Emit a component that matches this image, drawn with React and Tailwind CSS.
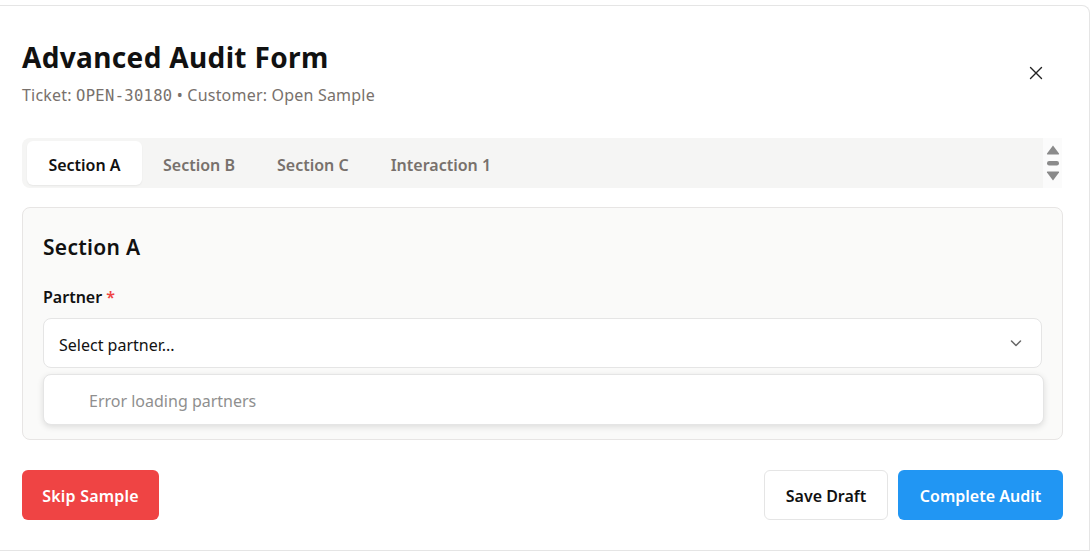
import React from "react";

const font = { fontFamily: '"Noto Sans", "Open Sans", sans-serif' };

export default function App() {
  return (
    <div className="w-[1090px] h-[551px] overflow-hidden bg-white" style={font}>
      <div className="mt-[5px] h-[546px] border-y border-r border-[#e5e5e5] rounded-tr-lg bg-white flex flex-col px-[22px]">
        {/* Header */}
        <div className="flex items-start justify-between pt-[34px] w-[1041px]">
          <div>
            <h1 className="text-[28px] leading-[34px] font-bold text-[#111] tracking-[0.35px]">Advanced Audit Form</h1>
            <p className="mt-[10px] text-[16px] leading-[22px] text-[#78716c] tracking-[0.2px]">
              Ticket: <span style={{ fontFamily: '"DejaVu Sans Mono", monospace' }} className="text-[15.5px] tracking-[0.3px]">OPEN-30180</span> • Customer: Open Sample
            </p>
          </div>
          <button className="mt-[26px] mr-[20px] w-[14px] h-[14px] text-[#222]">
            <svg viewBox="0 0 14 14" width="14" height="14" fill="none" stroke="currentColor" strokeWidth="1.4" strokeLinecap="round">
              <path d="M1.5 1.5 L12.5 12.5 M12.5 1.5 L1.5 12.5" />
            </svg>
          </button>
        </div>

        {/* Tabs */}
        <div className="mt-[31px] flex items-stretch h-[50px] w-[1040px]">
          <div className="flex-1 bg-[#f5f5f4] rounded-l-lg flex items-center px-[5px]">
            <div className="h-[44px] w-[115px] pt-[3px] bg-white rounded-md shadow-[0_1px_2px_rgba(0,0,0,0.06)] flex items-center justify-center text-[16px] font-semibold text-[#111]">Section A</div>
            <div className="h-[44px] pt-[3px] px-[21px] flex items-center text-[16px] font-semibold text-[#78716c]">Section B</div>
            <div className="h-[44px] pt-[3px] px-[21px] flex items-center text-[16px] font-semibold text-[#78716c]">Section C</div>
            <div className="h-[44px] pt-[3px] px-[21px] flex items-center text-[16px] font-semibold text-[#78716c]">Interaction 1</div>
          </div>
          <div className="w-[19px] bg-[#fbfbfb] flex items-center justify-center">
            <svg width="14" height="38" viewBox="0 0 14 38" fill="#8a8a8a">
              <path d="M7 1.5 L13 9.5 Q13.5 10.5 12.3 10.5 L1.7 10.5 Q0.5 10.5 1 9.5 Z" />
              <rect x="1" y="17" width="12" height="4.5" rx="2.2" />
              <path d="M7 36.5 L13 28.5 Q13.5 27.5 12.3 27.5 L1.7 27.5 Q0.5 27.5 1 28.5 Z" />
            </svg>
          </div>
        </div>

        {/* Section card */}
        <div className="mt-[19px] w-[1041px] bg-[#fafaf9] border border-[#e7e5e4] rounded-lg px-[20px] pt-[25px] pb-[14px]">
          <h2 className="text-[21px] leading-[28px] font-semibold text-[#111] tracking-[0.3px]">Section A</h2>
          <label className="mt-[25px] block text-[16px] leading-[22px] font-semibold text-[#111]">
            Partner <span className="text-[#ef4444]">*</span>
          </label>
          <div className="mt-[10px] h-[50px] pt-[3px] bg-white border border-[#e5e5e5] rounded-lg flex items-center justify-between pl-[15px] pr-[18px]">
            <span className="text-[16px] text-[#111]">Select partner...</span>
            <svg width="14" height="14" viewBox="0 0 14 14" fill="none" stroke="#666" strokeWidth="1.5" strokeLinecap="round" strokeLinejoin="round" className="-mt-[3px]">
              <path d="M2.5 5 L7 9.5 L11.5 5" />
            </svg>
          </div>
          <div className="mt-[6px] mr-[-2px] h-[51px] pt-[2px] bg-white border border-[#e5e5e5] rounded-lg shadow-[0_2px_6px_rgba(0,0,0,0.12)] flex items-center pl-[45px]">
            <span className="text-[16px] text-[#8f8f8f]">Error loading partners</span>
          </div>
        </div>

        {/* Footer */}
        <div className="mt-[30px] flex items-center justify-between w-[1041px]">
          <button className="h-[50px] w-[137px] pt-[2px] bg-[#ef4444] rounded-md text-white text-[16px] font-semibold tracking-[0.2px]">Skip Sample</button>
          <div className="flex gap-[10px]">
            <button className="h-[50px] w-[124px] pt-[2px] bg-white border border-[#e5e5e5] rounded-md text-[#111] text-[16px] font-semibold">Save Draft</button>
            <button className="h-[50px] w-[165px] pt-[2px] bg-[#2196f3] rounded-md text-white text-[16px] font-semibold">Complete Audit</button>
          </div>
        </div>
      </div>
    </div>
  );
}
